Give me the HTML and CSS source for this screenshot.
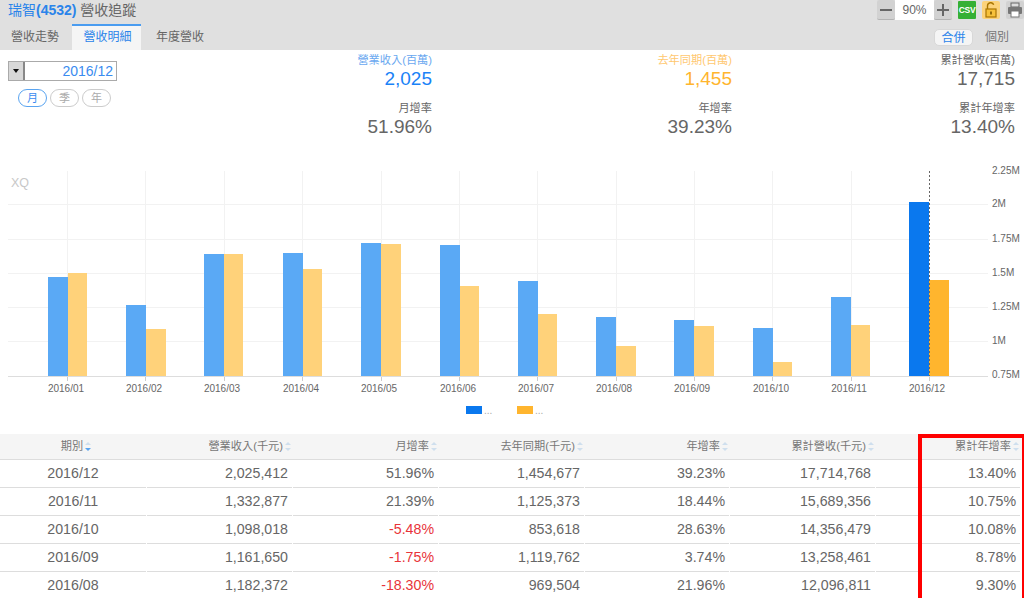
FILE: index.html
```html
<!DOCTYPE html>
<html lang="zh-Hant">
<head>
<meta charset="utf-8">
<title>瑞智(4532) 營收追蹤</title>
<link rel="stylesheet" href="styles.css">
</head>
<body>
<div class="page">
  <header class="head">
    <div class="head-top">
      <h1 class="title"><span class="title-stock">瑞智<b class="title-code">(4532)</b></span> 營收追蹤</h1>
      <div class="tools">
        <div class="zoom">
          <button class="zoom-btn"><svg width="14" height="14" viewBox="0 0 14 14"><path d="M1 7h12" stroke="#666" stroke-width="2"/></svg></button>
          <span class="zoom-val">90%</span>
          <button class="zoom-btn"><svg width="14" height="14" viewBox="0 0 14 14"><path d="M1 7h12M7 1v12" stroke="#666" stroke-width="2"/></svg></button>
        </div>
        <span class="csv">CSV</span>
        <span class="lock"><svg width="12" height="16" viewBox="0 0 12 16"><path d="M2.500 7V3.800a3.200 3.200 0 0 1 6.200-1" fill="none" stroke="#a87400" stroke-width="1.400"/><rect x="1" y="7" width="10" height="8" fill="#f7c13a" stroke="#a87400" stroke-width="1.200"/><rect x="5.200" y="9.500" width="1.600" height="3" fill="#7a5600"/></svg></span>
        <span class="print"><svg width="16" height="16" viewBox="0 0 16 16"><rect x="4" y="1" width="8" height="4" fill="#ddd" stroke="#666"/><rect x="1" y="5" width="14" height="7" rx="1" fill="#777"/><rect x="4" y="9" width="8" height="6" fill="#fff" stroke="#777"/></svg></span>
      </div>
    </div>
    <div class="head-tabs">
      <nav class="tabs">
        <a class="tab">營收走勢</a>
        <a class="tab tab-on">營收明細</a>
        <a class="tab tab-last">年度營收</a>
      </nav>
      <div class="scope">
        <span class="scope-on">合併</span>
        <span class="scope-off">個別</span>
      </div>
    </div>
  </header>

  <section class="summary">
    <div class="picker">
      <div class="date">
        <span class="date-btn"></span>
        <span class="date-val">2016/12</span>
      </div>
      <div class="pills">
        <span class="pill pill-on">月</span>
        <span class="pill">季</span>
        <span class="pill">年</span>
      </div>
    </div>
    <div class="stat">
      <div class="lab c-blue-l">營業收入(百萬)</div>
      <div class="num c-blue">2,025</div>
      <div class="lab lab-2">月增率</div>
      <div class="num">51.96%</div>
    </div>
    <div class="stat">
      <div class="lab c-yel-l">去年同期(百萬)</div>
      <div class="num c-yel">1,455</div>
      <div class="lab lab-2">年增率</div>
      <div class="num">39.23%</div>
    </div>
    <div class="stat">
      <div class="lab">累計營收(百萬)</div>
      <div class="num">17,715</div>
      <div class="lab lab-2">累計年增率</div>
      <div class="num">13.40%</div>
    </div>
  </section>

  <svg class="chart" width="1024" height="278" viewBox="0 150 1024 278">
    <g class="grid">
      <path d="M8 204.500H988M8 239.500H988M8 273.500H988M8 307.500H988M8 341.500H988"/>
      <path d="M67.500 171V376M145.500 171V376M224.500 171V376M302.500 171V376M381.500 171V376M459.500 171V376M537.500 171V376M616.500 171V376M694.500 171V376M772.500 171V376M851.500 171V376"/>
    </g>
    <text class="xq" x="11" y="187">XQ</text>
    <g class="bar-a">
      <rect x="48" y="277" width="20" height="99"/>
      <rect x="126" y="305" width="20" height="71"/>
      <rect x="204" y="254" width="20" height="122"/>
      <rect x="283" y="253" width="20" height="123"/>
      <rect x="361" y="243" width="20" height="133"/>
      <rect x="440" y="245" width="20" height="131"/>
      <rect x="518" y="281" width="20" height="95"/>
      <rect x="596" y="317" width="20" height="59"/>
      <rect x="674" y="320" width="20" height="56"/>
      <rect x="753" y="328" width="20" height="48"/>
      <rect x="831" y="297" width="20" height="79"/>
    </g>
    <g class="bar-b">
      <rect x="68" y="273" width="19" height="103"/>
      <rect x="146" y="329" width="20" height="47"/>
      <rect x="224" y="254" width="19" height="122"/>
      <rect x="303" y="269" width="19" height="107"/>
      <rect x="381" y="244" width="20" height="132"/>
      <rect x="460" y="286" width="19" height="90"/>
      <rect x="538" y="314" width="19" height="62"/>
      <rect x="616" y="346" width="20" height="30"/>
      <rect x="694" y="326" width="20" height="50"/>
      <rect x="773" y="362" width="19" height="14"/>
      <rect x="851" y="325" width="19" height="51"/>
    </g>
    <rect class="bar-a-on" x="909" y="202" width="20" height="174"/>
    <rect class="bar-b-on" x="929" y="280" width="20" height="96"/>
    <path class="cross" d="M929.500 171V376"/>
    <path class="base" d="M8 376.500H988"/>
    <g class="ticks">
      <path d="M67.500 377V381M145.500 377V381M224.500 377V381M302.500 377V381M381.500 377V381M459.500 377V381M537.500 377V381M616.500 377V381M694.500 377V381M772.500 377V381M851.500 377V381M929.500 377V381"/>
    </g>
    <g class="axis-x">
      <text x="66" y="392">2016/01</text>
      <text x="144" y="392">2016/02</text>
      <text x="222" y="392">2016/03</text>
      <text x="301" y="392">2016/04</text>
      <text x="379" y="392">2016/05</text>
      <text x="458" y="392">2016/06</text>
      <text x="536" y="392">2016/07</text>
      <text x="614" y="392">2016/08</text>
      <text x="692" y="392">2016/09</text>
      <text x="771" y="392">2016/10</text>
      <text x="849" y="392">2016/11</text>
      <text x="927" y="392">2016/12</text>
    </g>
    <g class="axis-y">
      <text x="992" y="174">2.25M</text>
      <text x="992" y="207">2M</text>
      <text x="992" y="242">1.75M</text>
      <text x="992" y="276">1.5M</text>
      <text x="992" y="310">1.25M</text>
      <text x="992" y="344">1M</text>
      <text x="992" y="378">0.75M</text>
    </g>
    <rect class="bar-a-on" x="466" y="406" width="16" height="8"/>
    <rect class="bar-b-on" x="517" y="406" width="16" height="8"/>
    <text class="leg" x="484" y="414">...</text>
    <text class="leg" x="535" y="414">...</text>
  </svg>

  <section class="table">
    <div class="row row-head">
      <div class="cell cell-c">期別<i class="sort sort-down"></i></div>
      <div class="cell">營業收入(千元)<i class="sort"></i></div>
      <div class="cell">月增率<i class="sort"></i></div>
      <div class="cell">去年同期(千元)<i class="sort"></i></div>
      <div class="cell">年增率<i class="sort"></i></div>
      <div class="cell">累計營收(千元)<i class="sort"></i></div>
      <div class="cell">累計年增率<i class="sort"></i></div>
    </div>
    <div class="row">
      <div class="cell cell-c">2016/12</div><div class="cell">2,025,412</div><div class="cell">51.96%</div><div class="cell">1,454,677</div><div class="cell">39.23%</div><div class="cell">17,714,768</div><div class="cell">13.40%</div>
    </div>
    <div class="row">
      <div class="cell cell-c">2016/11</div><div class="cell">1,332,877</div><div class="cell">21.39%</div><div class="cell">1,125,373</div><div class="cell">18.44%</div><div class="cell">15,689,356</div><div class="cell">10.75%</div>
    </div>
    <div class="row">
      <div class="cell cell-c">2016/10</div><div class="cell">1,098,018</div><div class="cell neg">-5.48%</div><div class="cell">853,618</div><div class="cell">28.63%</div><div class="cell">14,356,479</div><div class="cell">10.08%</div>
    </div>
    <div class="row">
      <div class="cell cell-c">2016/09</div><div class="cell">1,161,650</div><div class="cell neg">-1.75%</div><div class="cell">1,119,762</div><div class="cell">3.74%</div><div class="cell">13,258,461</div><div class="cell">8.78%</div>
    </div>
    <div class="row">
      <div class="cell cell-c">2016/08</div><div class="cell">1,182,372</div><div class="cell neg">-18.30%</div><div class="cell">969,504</div><div class="cell">21.96%</div><div class="cell">12,096,811</div><div class="cell">9.30%</div>
    </div>
    <div class="mark"></div>
  </section>
</div>
</body>
</html>
```
FILE: styles.css
```css
* { box-sizing: border-box; }
html, body { margin: 0; padding: 0; height: 598px; overflow: hidden; background: #fff; }
body { font-family: "Liberation Sans", "Noto Sans CJK TC", sans-serif; color: #666; }
.page { width: 1024px; height: 598px; overflow: hidden; display: flex; flex-direction: column; }

.head { height: 50px; background: #e0e0e0; display: flex; flex-direction: column; flex: none; }
.head-top { height: 24px; display: flex; justify-content: space-between; align-items: flex-start; }
.title { margin: 0; padding: 1px 0 0 8px; font-size: 14px; line-height: 19px; font-weight: 400; color: #666; }
.title-stock { color: #2a84ea; }
.title-code { font-weight: 700; }
.tools { display: flex; align-items: flex-start; }
.zoom { display: flex; margin-right: 6px; }
.zoom-btn { width: 18px; height: 20px; margin: 0; padding: 0; border: 0; border-bottom: 1px solid #b4b4b4; border-radius: 2px; background: #d2d2d2; display: flex; align-items: center; justify-content: center; }
.zoom-val { width: 39px; height: 20px; background: #fff; text-align: center; font-size: 12px; line-height: 20px; color: #666; }
.csv { width: 18px; height: 18px; margin: 1px 6px 0 0; background: #35b035; color: #fff; font-size: 8.500px; letter-spacing: -0.300px; font-weight: 700; line-height: 18px; text-align: center; border-radius: 1px; }
.lock { width: 18px; height: 18px; margin: 1px 6px 0 0; background: #fcd27a; border-radius: 2px; display: flex; align-items: center; justify-content: center; }
.print { width: 18px; height: 18px; margin: 1px 0 0 0; background: #d2d2d2; border-radius: 2px; display: flex; align-items: center; justify-content: center; }

.head-tabs { height: 26px; display: flex; justify-content: space-between; }
.tabs { display: flex; }
.tab { width: 70px; height: 26px; text-align: center; font-size: 12px; line-height: 26px; color: #666; }
.tab-on { width: 69px; margin: 0 2px; padding-left: 2px; background: #f5f5f5; border-top: 2px solid #4a9cf0; color: #2a84ea; line-height: 23px; }
.tab-last { margin-left: 2px; }
.scope { display: flex; align-items: flex-start; padding: 5px 15px 0 0; font-size: 12px; line-height: 16px; }
.scope-on { width: 39px; height: 17px; border-radius: 5px; background: #f5f5f5; border: 1px solid #d8d8d8; color: #2a84ea; text-align: center; margin-right: 12px; }
.scope-off { color: #777; }

.summary { height: 100px; flex: none; display: grid; grid-template-columns: 134px 298px 300px 283px; padding-right: 9px; }
.picker { padding: 11px 0 0 8px; }
.date { width: 109px; height: 20px; border: 1px solid #aaa; display: flex; }
.date-btn { width: 16px; height: 18px; background: #d8d8d8; border-right: 2px solid #888; position: relative; }
.date-btn::after { content: ""; position: absolute; left: 4px; top: 7px; border: 3.500px solid transparent; border-top: 4px solid #111; border-bottom: 0; }
.date-val { flex: 1; text-align: right; font-size: 14px; line-height: 18px; color: #3a8cf0; padding-right: 3px; }
.pills { display: flex; gap: 3px; margin: 8px 0 0 10px; }
.pill { width: 29px; height: 18px; border: 1px solid #ccc; border-radius: 9px; font-size: 11px; line-height: 16px; text-align: center; color: #aaa; }
.pill-on { border-color: #5aa4f0; color: #3a8cf0; }

.stat { text-align: right; padding-top: 3px; }
.lab { font-size: 11.200px; line-height: 14px; color: #666; }
.lab-2 { margin-top: 11px; }
.num { font-size: 19px; line-height: 23px; color: #666; }
.c-blue { color: #1a82f7; }
.c-blue-l { color: #6aa8f0; }
.c-yel { color: #ffb52e; }
.c-yel-l { color: #ffc870; }

.chart { display: block; flex: none; }
.grid path { fill: none; stroke: #f2f2f2; stroke-width: 1; }
.xq { font-size: 12.500px; fill: #c8c8c8; }
.bar-a rect { fill: #5aa9f5; }
.bar-b rect { fill: #ffd27a; }
.bar-a-on { fill: #0a78ee; }
.bar-b-on { fill: #ffb52e; }
.cross { fill: none; stroke: #666; stroke-dasharray: 2 2; }
.base { fill: none; stroke: #ddd; }
.ticks path { fill: none; stroke: #ccc; }
.axis-x text { font-size: 10px; fill: #666; text-anchor: middle; }
.axis-y text { font-size: 10px; fill: #666; }
.leg { font-size: 10px; fill: #aaa; }

.table { flex: none; margin-top: 6px; position: relative; width: 1024px; }
.row { display: grid; grid-template-columns: 147px 146px 146px 146px 145px 146px 145px; height: 28px; }
.cell { font-size: 14.200px; line-height: 27px; text-align: right; padding-right: 4px; border-bottom: 1px solid #ddd; color: #666; margin-right: 1px; }
.cell-c { text-align: center; padding-right: 0; padding-left: 0; }
.row-head { height: 26px; background: #f5f5f5; }
.row-head .cell { font-size: 11.200px; line-height: 25px; margin-right: 0; padding-right: 1px; color: #777; }
.row-head .cell-c { padding-right: 0; padding-left: 6px; }
.neg { color: #e8353a; }
.sort { display: inline-block; width: 7px; height: 9px; margin-left: 2px; vertical-align: -1px; position: relative; }
.sort::before, .sort::after { content: ""; position: absolute; left: 0; border-left: 3px solid transparent; border-right: 3px solid transparent; }
.sort::before { top: 0; border-bottom: 3.500px solid #cfdfee; }
.sort::after { bottom: 0; border-top: 3.500px solid #cfdfee; }
.sort-down::after { border-top-color: #5aa4f0; }
.mark { position: absolute; left: 918px; top: 0; width: 108px; height: 170px; border: 4.500px solid #f00; }
```
